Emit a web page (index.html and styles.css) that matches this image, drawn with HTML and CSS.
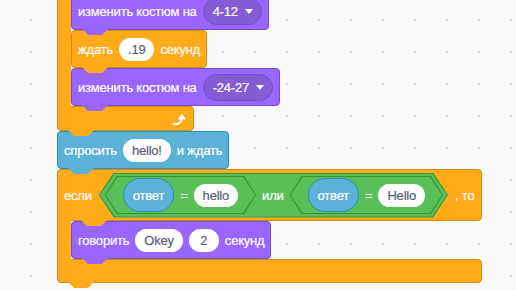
FILE: index.html
```html
<!DOCTYPE html>
<html lang="ru">
<head>
    <meta charset="UTF-8">
    <meta name="viewport" content="width=device-width, initial-scale=1.0">
    <title>Scratch script</title>
    <link rel="stylesheet" href="styles.css">
</head>
<body>
    <div class="script">
        <!-- repeat loop, its header is scrolled out of view -->
        <div class="c-block control repeat">
            <div class="c-body">
                <div class="c-arm control"></div>
                <div class="stack">
                    <div class="block looks">изменить костюм на <span class="dropdown">4-12 <i class="caret"></i></span></div>
                    <div class="block control">ждать <span class="pill">.19</span> секунд</div>
                    <div class="block looks">изменить костюм на <span class="dropdown">-24-27 <i class="caret"></i></span></div>
                </div>
            </div>
            <div class="c-foot control">
                <svg class="loop-icon" width="14" height="14" viewBox="0 0 14 14">
                    <path d="M1.8 12 C6 12.4 9.3 11 9.8 6.5" fill="none" stroke="#fff" stroke-width="2.2" stroke-linecap="round"/>
                    <polygon points="6.6,7 9.9,2.2 13.2,7" fill="#fff" stroke="#fff" stroke-width="1" stroke-linejoin="round"/>
                </svg>
            </div>
        </div>

        <div class="block sensing">спросить <span class="pill">hello!</span> и ждать</div>

        <div class="c-block control">
            <div class="c-head control">
                <span>если</span>
                <div class="bool outer">
                    <div class="bool eq">
                        <span class="reporter">ответ</span>
                        <span>=</span>
                        <span class="pill">hello</span>
                    </div>
                    <span>или</span>
                    <div class="bool eq">
                        <span class="reporter">ответ</span>
                        <span>=</span>
                        <span class="pill">Hello</span>
                    </div>
                </div>
                <span>, то</span>
            </div>
            <div class="c-body">
                <div class="c-arm control"></div>
                <div class="stack">
                    <div class="block looks">говорить <span class="pill">Okey</span> <span class="pill">2</span> секунд</div>
                </div>
            </div>
            <div class="c-foot control"></div>
        </div>
    </div>
</body>
</html>
```

FILE: styles.css
```css
body {
    margin: 0;
    width: 516px;
    height: 290px;
    overflow: hidden;
    position: relative;
    font-family: "Liberation Sans", Arial, sans-serif;
    font-size: 13px;
    letter-spacing: -0.2px;
    -webkit-text-stroke: 0.2px currentColor;
    color: #fff;
    background-color: #f9f9f9;
    background-image: radial-gradient(circle at 1px 1px, #d4d4d4 0.8px, transparent 1.4px);
    background-size: 32px 32px;
    background-position: 30px 19px;
}

.script {
    position: absolute;
    left: 57px;
    top: -8px;
    display: flex;
    flex-direction: column;
    align-items: flex-start;
}

/* category colours */
.looks {
    background-color: #9966ff;
    border-color: #774dcb;
}

.control {
    background-color: #ffab19;
    border-color: #cf8b17;
}

.sensing {
    background-color: #5cb1d6;
    border-color: #2e8eb8;
}

.block {
    position: relative;
    display: flex;
    align-items: center;
    gap: 6px;
    height: 38px;
    padding: 0 6px;
    box-sizing: border-box;
    border-width: 1px;
    border-style: solid;
    border-radius: 4px;
    white-space: nowrap;
}

/* the tab under each stack block */
.block::after,
.c-foot::after,
.c-head::after {
    content: "";
    position: absolute;
    top: 100%;
    left: 10px;
    width: 26px;
    height: 6px;
    background: inherit;
    clip-path: polygon(0 0, 100% 0, calc(100% - 6px) 100%, 6px 100%);
    z-index: 2;
}

.c-head::after {
    left: 23px;
}

.c-block {
    display: flex;
    flex-direction: column;
    align-items: stretch;
    background: none;
}

.c-head {
    position: relative;
    display: flex;
    align-items: center;
    gap: 7px;
    height: 52px;
    padding: 0 6px;
    box-sizing: border-box;
    border: 1px solid #cf8b17;
    border-radius: 4px 4px 4px 0;
    white-space: nowrap;
}

.c-body {
    display: flex;
    align-items: stretch;
}

.c-arm {
    position: relative;
    z-index: 1;
    width: 13px;
    margin: -1px 0;
    border-left: 1px solid #cf8b17;
}

.stack {
    display: flex;
    flex-direction: column;
    align-items: flex-start;
}

.c-foot {
    position: relative;
    height: 24px;
    box-sizing: border-box;
    border: 1px solid #cf8b17;
    border-radius: 0 4px 4px 4px;
}

.repeat .c-foot {
    width: 137px;
    height: 25px;
    display: flex;
    align-items: center;
    justify-content: flex-end;
    padding-right: 7px;
}

.loop-icon {
    margin-top: 1px;
}

/* inputs */
.pill {
    display: inline-flex;
    align-items: center;
    justify-content: center;
    min-width: 30px;
    height: 23px;
    padding: 0 9px;
    box-sizing: border-box;
    border-radius: 12px;
    background: #fff;
    color: #575e75;
}

.dropdown {
    display: inline-flex;
    align-items: center;
    gap: 7px;
    height: 27px;
    padding: 0 8px 0 9px;
    box-sizing: border-box;
    border: 1px solid #774dcb;
    border-radius: 14px;
    background: #855cd6;
}

.caret {
    width: 0;
    height: 0;
    border-left: 4.5px solid transparent;
    border-right: 4.5px solid transparent;
    border-top: 5px solid #fff;
}

.reporter {
    display: inline-flex;
    align-items: center;
    height: 34px;
    padding: 0 9px;
    box-sizing: border-box;
    border: 1px solid #2e8eb8;
    border-radius: 17px;
    background: #5cb1d6;
}

/* boolean hexagons */
.bool {
    --pt: 15px;
    position: relative;
    isolation: isolate;
    display: flex;
    align-items: center;
    gap: 6px;
    white-space: nowrap;
}

.bool::before,
.bool::after {
    content: "";
    position: absolute;
    z-index: -1;
    clip-path: polygon(var(--pt) 0, calc(100% - var(--pt)) 0, 100% 50%, calc(100% - var(--pt)) 100%, var(--pt) 100%, 0 50%);
}

.bool::before {
    inset: 0;
    background: #389438;
}

.bool::after {
    inset: 1px;
    background: #59c059;
}

.bool.outer {
    height: 45px;
    padding: 0 5px 0 6px;
}

.bool.eq {
    --pt: 12px;
    height: 38px;
    padding: 0 18px 0 18px;
}
```
